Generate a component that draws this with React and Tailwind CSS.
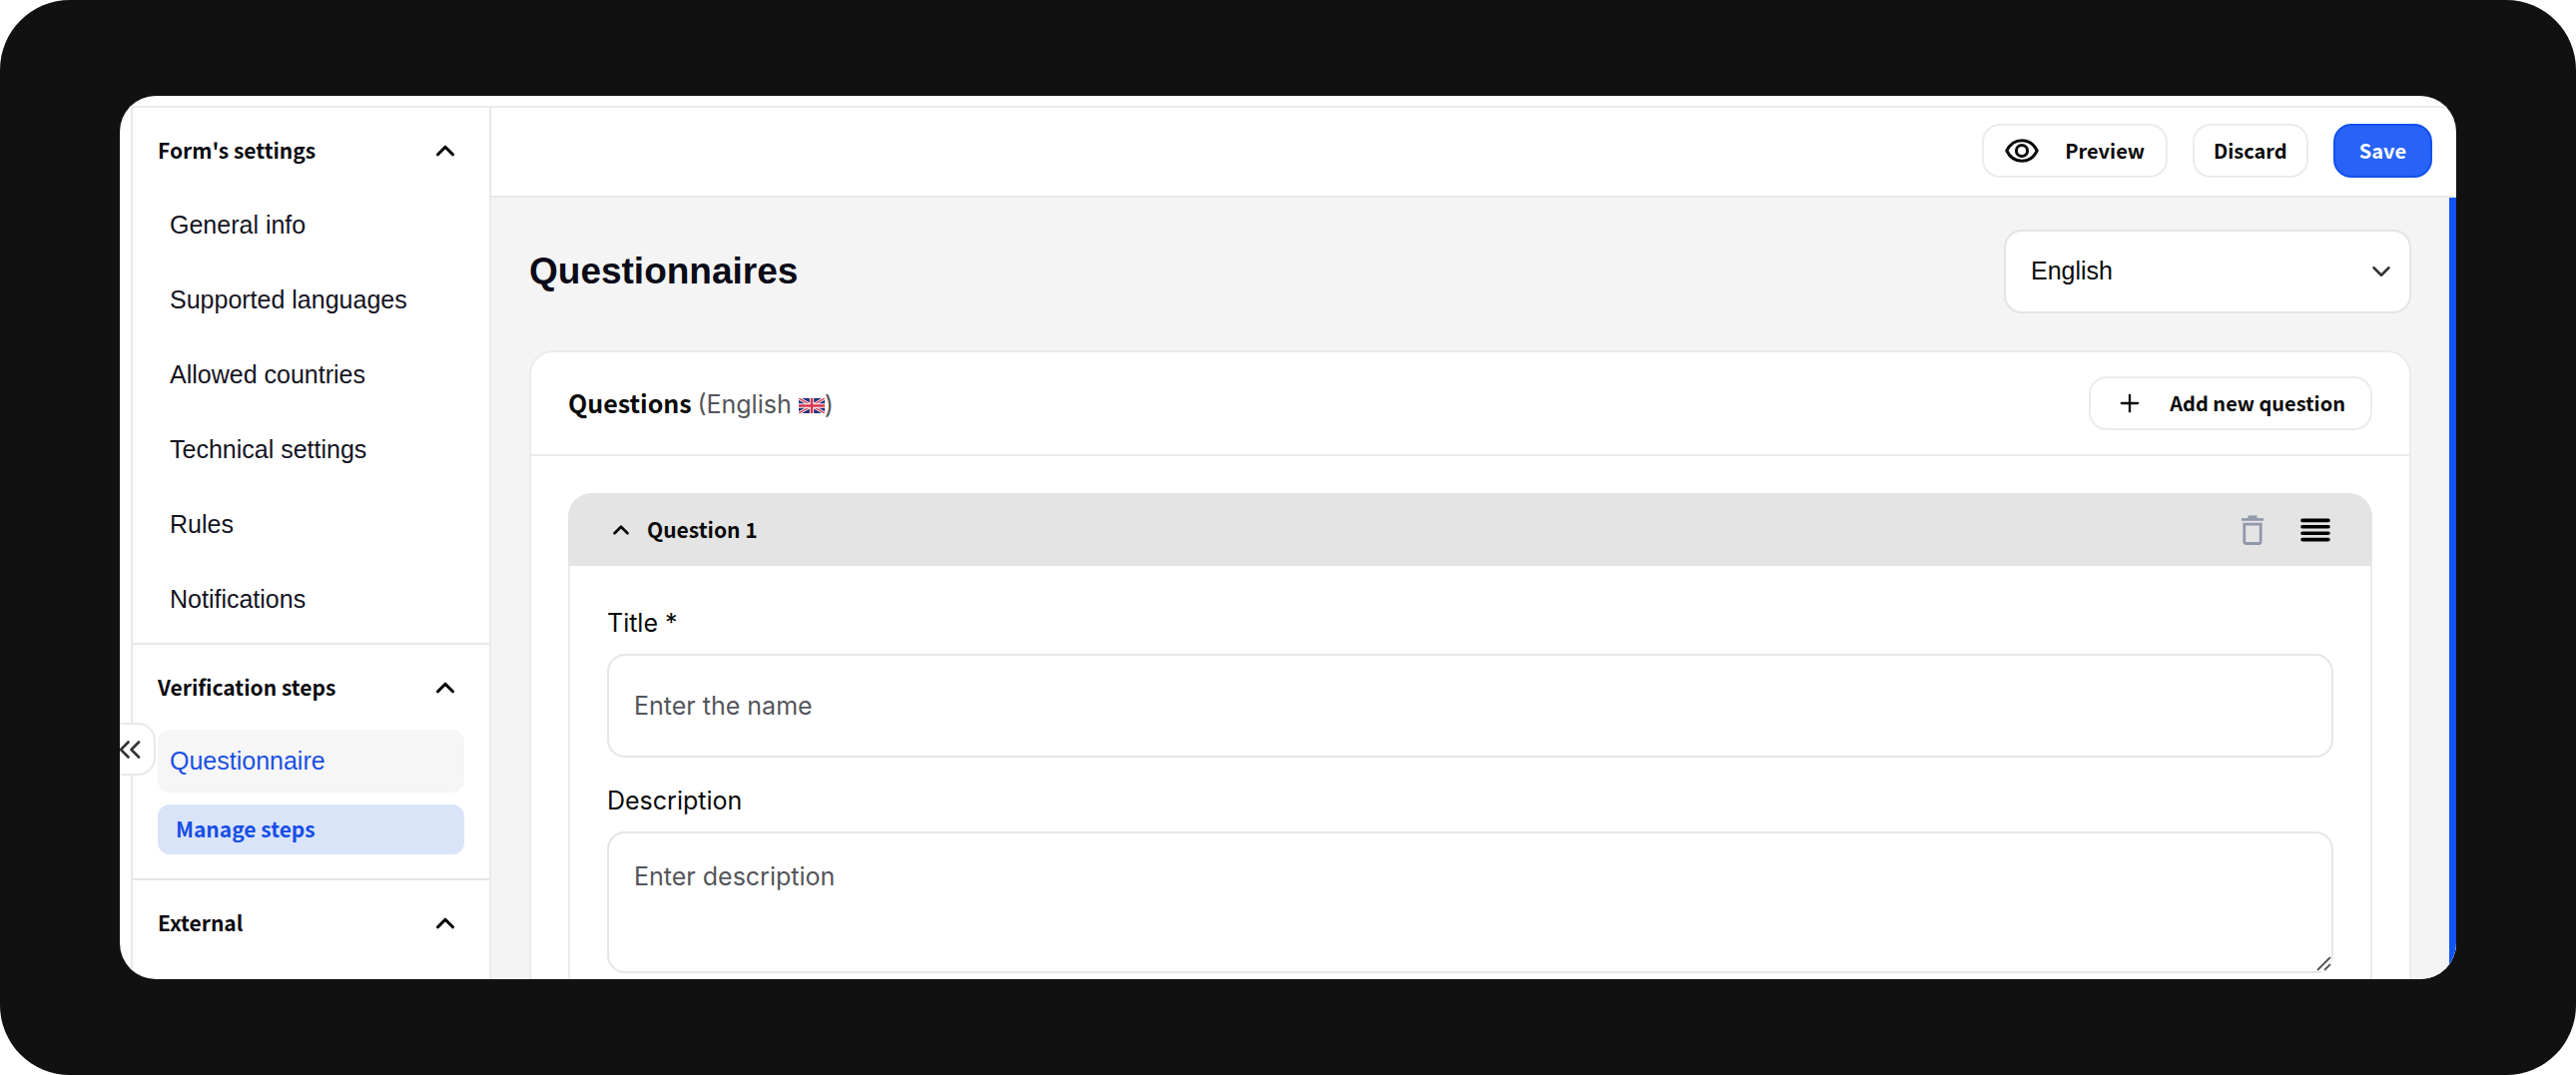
import { ChevronDown, ChevronUp, Plus } from "lucide-react";

const cjk = "font-['Noto_Sans_CJK_SC',sans-serif] font-bold";
const arial = "font-['Liberation_Sans',sans-serif]";

const settings = [
  "General info",
  "Supported languages",
  "Allowed countries",
  "Technical settings",
  "Rules",
  "Notifications",
];

function EyeIcon() {
  return (
    <svg width="34" height="24" viewBox="0 0 34 24" fill="none" stroke="currentColor" strokeWidth="3" strokeLinejoin="round" aria-hidden="true">
      <path d="M1.800 12C5 5.500 10.600 1.700 17 1.700S29 5.500 32.200 12C29 18.500 23.400 22.300 17 22.300S5 18.500 1.800 12Z" />
      <circle cx="17" cy="12" r="5.600" />
    </svg>
  );
}

function TrashIcon() {
  return (
    <svg width="24" height="30" viewBox="0 0 24 30" fill="none" stroke="currentColor" aria-hidden="true">
      <path d="M1 4.500H23" strokeWidth="2.600" />
      <path d="M7.500 2H16.500" strokeWidth="3" />
      <path d="M3.800 9.200H20.200V26.500A2 2 0 0 1 18.200 28.500H5.800A2 2 0 0 1 3.800 26.500Z" strokeWidth="2.800" />
    </svg>
  );
}

function DragIcon() {
  return (
    <svg width="30" height="24" viewBox="0 0 30 24" fill="none" stroke="currentColor" strokeWidth="3.600" strokeLinecap="round" aria-hidden="true">
      <path d="M2 2.400H28M2 8.800H28M2 15.200H28M2 21.600H28" />
    </svg>
  );
}

function CollapseIcon() {
  return (
    <svg width="22" height="18" viewBox="0 0 22 18" fill="none" stroke="currentColor" strokeWidth="2.600" strokeLinecap="round" strokeLinejoin="round" aria-hidden="true">
      <path d="M9.500 1.500L2 9L9.500 16.500M20 1.500L12.500 9L20 16.500" />
    </svg>
  );
}

function ResizeGrip() {
  return (
    <svg className="pointer-events-none absolute right-0.5 bottom-0.5 bg-white text-[#555]" width="15" height="15" viewBox="0 0 15 15" fill="none" stroke="currentColor" strokeWidth="1.800" aria-hidden="true">
      <path d="M1 14L14 1M8 14L14 8" />
    </svg>
  );
}

function FlagUK() {
  return (
    <svg className="inline-block align-baseline" width="26" height="15" viewBox="0 0 60 34" preserveAspectRatio="none" role="img" aria-label="United Kingdom">
      <rect width="60" height="34" fill="#1f2f7e" />
      <path d="M0 0L60 34M60 0L0 34" stroke="#fff" strokeWidth="7" />
      <path d="M0 0L60 34M60 0L0 34" stroke="#d8354a" strokeWidth="3" />
      <path d="M30 0V34M0 17H60" stroke="#fff" strokeWidth="10" />
      <path d="M30 0V34M0 17H60" stroke="#d8354a" strokeWidth="6" />
    </svg>
  );
}

function Section({ title, children }) {
  return (
    <section className="border-b-2 border-[#e6e6e6] px-[25px] last:border-b-0">
      <h2>
        <button className={`${cjk} flex h-[85px] w-full items-center justify-between text-[21px] text-[#0a0a10]`}>
          {title}
          <ChevronUp size={30} strokeWidth={2.5} className="mr-1 text-black" aria-hidden="true" />
        </button>
      </h2>
      {children}
    </section>
  );
}

function OutlineButton({ className, children }) {
  return (
    <button className={`${cjk} flex h-[54px] items-center rounded-[18px] border-2 border-[#ececec] bg-white text-xl text-[#0a0a0a] ${className}`}>
      {children}
    </button>
  );
}

export default function App() {
  return (
    <div className="flex h-screen rounded-[70px] bg-[#111111] px-[120px] py-24">
      <div className="relative flex min-w-0 flex-1 flex-col overflow-hidden rounded-[36px] bg-white pt-2.5">
        <div className="flex min-h-0 flex-1 border-t-2 border-[#ececec]">
          <nav aria-label="Form editor" className="ml-[11px] w-[361px] shrink-0 overflow-hidden border-x-2 border-[#e9e9e9]">
            <Section title="Form's settings">
              <ul className="flex flex-col gap-3 pt-px pb-3">
                {settings.map((label) => (
                  <li key={label}>
                    <a href="#" className={`${arial} flex h-[63px] items-center px-3 text-[25px] text-[#14141f]`}>
                      {label}
                    </a>
                  </li>
                ))}
              </ul>
            </Section>
            <Section title="Verification steps">
              <div className="flex flex-col gap-3 pb-6">
                <a href="#" aria-current="page" className={`${arial} flex h-[63px] items-center rounded-xl bg-[#f6f6f6] px-3 text-[25px] text-[#1a50e4]`}>
                  Questionnaire
                </a>
                <button className={`${cjk} flex h-[50px] items-center rounded-xl bg-[#dae4f9] px-[18px] text-[21px] text-[#174ee6]`}>
                  Manage steps
                </button>
              </div>
            </Section>
            <Section title="External" />
          </nav>

          <div className="flex min-w-0 flex-1 flex-col">
            <header className="flex h-[90px] shrink-0 items-center justify-end gap-[25px] border-b-2 border-[#e9e9e9] pr-6 pb-0.5">
              <OutlineButton className="gap-[26px] px-[21px]">
                <EyeIcon />
                Preview
              </OutlineButton>
              <OutlineButton className="px-[19px]">Discard</OutlineButton>
              <button className={`${cjk} flex h-[54px] items-center rounded-[18px] border-2 border-[#1450ee] bg-[#2763f6] px-6 text-xl text-white`}>
                Save
              </button>
            </header>

            <main className="min-h-0 flex-1 overflow-hidden border-r-[7px] border-[#0f55f5] bg-[#f4f4f4] px-[38px] pt-8">
              <div className="flex items-center justify-between">
                <h1 className={`${arial} text-[37px] font-bold text-[#0b0b18]`}>Questionnaires</h1>
                <div className="relative w-[408px]">
                  <select aria-label="Language" className={`${arial} h-[84px] w-full appearance-none rounded-[18px] border-2 border-[#e4e4e4] bg-white px-[25px] text-[25px] text-[#0a0a0a]`}>
                    <option>English</option>
                  </select>
                  <ChevronDown size={30} strokeWidth={2} className="pointer-events-none absolute top-[27px] right-[15px] text-[#333]" aria-hidden="true" />
                </div>
              </div>

              <section className="mt-[37px] rounded-t-3xl border-2 border-[#ebebeb] bg-white">
                <div className="flex items-center justify-between border-b-2 border-[#ebebeb] px-[37px] py-6">
                  <h2 className={`${cjk} text-[25px] leading-[36px] text-[#0a0a0a]`}>
                    Questions{" "}
                    <span className="font-['Inter',sans-serif] font-normal text-[#55565b]">
                      (English <FlagUK />)
                    </span>
                  </h2>
                  <OutlineButton className="gap-[26px] px-[25px]">
                    <Plus size={28} strokeWidth={2} aria-hidden="true" />
                    Add new question
                  </OutlineButton>
                </div>

                <div className="p-[37px]">
                  <article className="rounded-t-[24px] border-2 border-t-0 border-[#ebebeb]">
                    <header className="-mx-0.5 flex h-[73px] items-center rounded-t-[24px] bg-[#e4e4e4] pr-[42px] pl-10 text-[#0a0a0a]">
                      <button className={`${cjk} flex items-center gap-[13px] text-[21px]`}>
                        <ChevronUp size={26} strokeWidth={2.5} aria-hidden="true" />
                        Question 1
                      </button>
                      <div className="ml-auto flex items-center gap-9">
                        <button aria-label="Delete question" className="text-[#8f98ab]">
                          <TrashIcon />
                        </button>
                        <button aria-label="Reorder question" className="text-black">
                          <DragIcon />
                        </button>
                      </div>
                    </header>
                    <div className="px-[37px] pt-[39px] font-['Inter',sans-serif] text-[25px] leading-[36px] text-[#0a0a0a]">
                      <label htmlFor="question-title" className="block">Title *</label>
                      <input
                        id="question-title"
                        type="text"
                        placeholder="Enter the name"
                        className="mt-[13px] block h-[104px] w-full rounded-[18px] border-2 border-[#e6e6e6] bg-white px-[25px] placeholder:text-[#55565b] placeholder:opacity-100"
                      />
                      <label htmlFor="question-description" className="mt-[25px] block">Description</label>
                      <div className="relative mt-[13px] mb-10">
                        <textarea
                          id="question-description"
                          rows={3}
                          placeholder="Enter description"
                          className="block w-full resize-y rounded-[18px] border-2 border-[#e6e6e6] bg-white px-[25px] pt-7 pb-5 leading-[30px] placeholder:text-[#55565b] placeholder:opacity-100"
                        />
                        <ResizeGrip />
                      </div>
                    </div>
                  </article>
                </div>
              </section>
            </main>
          </div>
        </div>

        <button aria-label="Collapse sidebar" className="absolute top-[628px] -left-5 flex h-[53px] w-14 items-center justify-end rounded-[18px] border-2 border-[#e9e9e9] bg-white pr-[13px] text-[#333]">
          <CollapseIcon />
        </button>
      </div>
    </div>
  );
}
